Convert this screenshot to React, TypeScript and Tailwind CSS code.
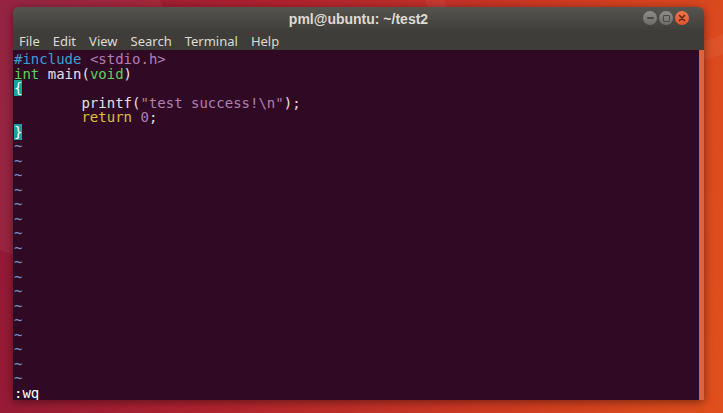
const mono = { fontFamily: '"DejaVu Sans Mono", "Liberation Mono", monospace' };

function Tilde() {
  return <div className="text-[#7b8fc8]">~</div>;
}

export default function App() {
  const tildes = Array.from({ length: 17 });
  return (
    <div className="relative w-[723px] h-[413px] overflow-hidden bg-[linear-gradient(100deg,#8e1838_0%,#b0222f_35%,#cf3a22_70%,#e0501c_100%)]">
      {/* soft wallpaper arcs */}
      <div className="absolute -top-[120px] left-[420px] w-[360px] h-[180px] rounded-full border-[18px] border-white/5" />
      <div className="absolute -top-[60px] -left-[80px] w-[260px] h-[320px] rounded-full bg-white/5" />

      <div className="relative pt-[7px] pl-[13px]">
        <div className="w-[691px] h-[393px] flex flex-col rounded-t-[6px] overflow-hidden shadow-[0_2px_10px_rgba(0,0,0,0.45)]">
          {/* title bar */}
          <div className="relative h-[23px] flex items-center justify-center bg-[linear-gradient(#55544f,#403f3b)]">
            <span
              className="text-[14px] font-bold text-[#dfdbd2] leading-none pt-[1px]"
              style={{ fontFamily: '"Liberation Sans", Arial, sans-serif' }}
            >
              pml@ubuntu: ~/test2
            </span>
            <div className="absolute right-[15px] top-[4px] flex gap-[2px]">
              <div className="w-[14px] h-[14px] rounded-full bg-[linear-gradient(#8d8c88,#6e6d69)] flex items-center justify-center">
                <div className="w-[7px] h-[2px] bg-[#4a4945] rounded-sm" />
              </div>
              <div className="w-[14px] h-[14px] rounded-full bg-[linear-gradient(#8d8c88,#6e6d69)] flex items-center justify-center">
                <div className="w-[7px] h-[7px] border-[1.5px] border-[#4a4945] rounded-[1px]" />
              </div>
              <div className="w-[14px] h-[14px] rounded-full bg-[linear-gradient(#f0764a,#e0552a)] flex items-center justify-center">
                <svg width="8" height="8" viewBox="0 0 8 8">
                  <path d="M1.5 1.5 L6.5 6.5 M6.5 1.5 L1.5 6.5" stroke="#5a2412" strokeWidth="1.5" strokeLinecap="round" />
                </svg>
              </div>
            </div>
          </div>

          {/* menu bar */}
          <div
            className="h-[20px] flex items-center gap-[13px] pl-[6px] pt-[3px] bg-[#3e3d39] text-[13px] text-[#dfdbd2]"
            style={{ fontFamily: '"Noto Sans", "DejaVu Sans", sans-serif' }}
          >
            <span>File</span>
            <span>Edit</span>
            <span>View</span>
            <span>Search</span>
            <span>Terminal</span>
            <span>Help</span>
          </div>

          {/* terminal */}
          <div className="flex-1 flex bg-[#300a24]">
            <div
              className="flex-1 pt-[2px] pl-[1px] text-[14px] leading-[14.5px] whitespace-pre text-[#e4e0e4]"
              style={mono}
            >
              <div>
                <span className="text-[#3a9fd6]">#include</span> <span className="text-[#b07fb4]">&lt;stdio.h&gt;</span>
              </div>
              <div>
                <span className="text-[#5ad35a]">int</span> main(<span className="text-[#5ad35a]">void</span>)
              </div>
              <div>
                <span className="bg-[#13a3a0] text-white">{"{"}</span>
              </div>
              <div>
                {"        printf("}
                <span className="text-[#b07fb4]">"test success!\n"</span>
                {");"}
              </div>
              <div>
                {"        "}
                <span className="text-[#d8c23c]">return</span> <span className="text-[#b07fb4]">0</span>;
              </div>
              <div>
                <span className="bg-[#13a3a0] text-white">{"}"}</span>
              </div>
              {tildes.map((_, i) => (
                <Tilde key={i} />
              ))}
              <div className="text-white">:wq</div>
            </div>
            <div className="w-[5px] bg-[#d9643f]" />
          </div>
        </div>
      </div>
    </div>
  );
}
